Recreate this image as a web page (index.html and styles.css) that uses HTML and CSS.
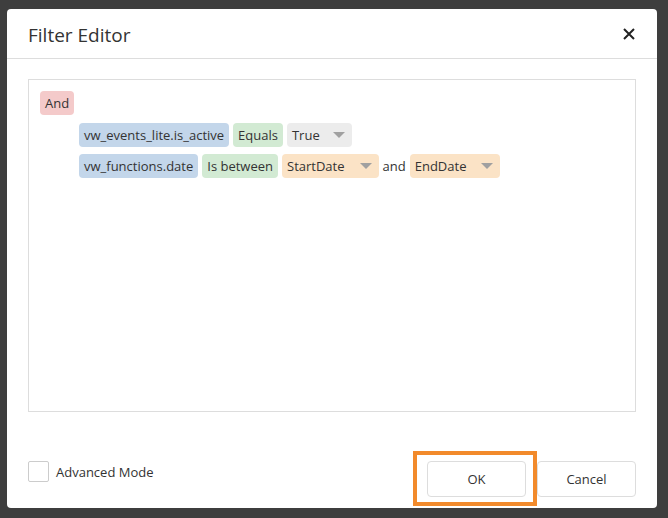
FILE: index.html
```html
<!DOCTYPE html>
<html lang="en">
<head>
    <meta charset="UTF-8" />
    <title>Filter Editor</title>
    <link rel="stylesheet" href="styles.css">
</head>
<body>
    <div class="dialog">
        <div class="dialog-header">
            <h2>Filter Editor</h2>
            <span class="close-btn">
                <svg width="12" height="12" viewBox="0 0 12 12">
                    <path d="M1 1 L11 11 M11 1 L1 11" stroke="#222" stroke-width="2" fill="none" />
                </svg>
            </span>
        </div>

        <div class="dialog-body">
            <div class="filter-box">
                <div class="row">
                    <span class="chip group">And</span>
                </div>
                <div class="row indent">
                    <span class="chip field">vw_events_lite.is_active</span>
                    <span class="chip operator">Equals</span>
                    <span class="chip value dropdown">True</span>
                </div>
                <div class="row indent">
                    <span class="chip field">vw_functions.date</span>
                    <span class="chip operator">Is between</span>
                    <span class="chip param dropdown">StartDate</span>
                    <span class="joiner">and</span>
                    <span class="chip param dropdown">EndDate</span>
                </div>
            </div>
        </div>

        <div class="dialog-footer">
            <label class="check">
                <span class="check-box"></span>
                Advanced Mode
            </label>
            <div class="buttons">
                <button class="btn ok">OK<span class="highlight"></span></button>
                <button class="btn">Cancel</button>
            </div>
        </div>
    </div>
</body>
</html>
```

FILE: styles.css
```css
body {
    font-family: "Open Sans", "Noto Sans", sans-serif;
    background-color: #3e3e3e;
    margin: 0;
    padding: 9px 0 0 7px;
    color: #333;
}

.dialog {
    width: 650px;
    height: 499px;
    background: #fff;
    border-radius: 4px;
    display: flex;
    flex-direction: column;
    box-sizing: border-box;
}

.dialog-header {
    height: 49px;
    border-bottom: 1px solid #ddd;
    display: flex;
    align-items: center;
    justify-content: space-between;
    padding: 0 21px;
}

    .dialog-header h2 {
        margin: 0;
        margin-top: 2px;
        font-size: 19px;
        font-weight: normal;
        color: #333;
    }

.close-btn {
    display: flex;
    margin-right: 1px;
}

.dialog-body {
    padding: 20px 21px 0;
}

.filter-box {
    height: 333px;
    border: 1px solid #ddd;
    padding: 11px;
    box-sizing: border-box;
    display: flex;
    flex-direction: column;
    gap: 7.5px;
}

.row {
    display: flex;
    align-items: center;
    gap: 4px;
}

    .row.indent {
        padding-left: 39px;
    }

.chip {
    height: 24px;
    line-height: 24px;
    padding: 0 5px;
    border-radius: 4px;
    font-size: 13px;
    white-space: nowrap;
}

.group { background: #f4caca; }
.field { background: #c3d6ea; }
.operator { background: #d2ead3; }
.value { background: #ececec; }
.param { background: #fbe3c6; }

.dropdown {
    position: relative;
    padding-right: 29px;
}

    .dropdown::after {
        content: "";
        position: absolute;
        right: 7px;
        top: 9px;
        border-left: 6px solid transparent;
        border-right: 6px solid transparent;
        border-top: 6px solid #a0a0a0;
    }

.value.dropdown { width: 31px; }
.param.dropdown { padding-right: 34px; }

.joiner {
    font-size: 13px;
}

.dialog-footer {
    margin-top: auto;
    display: flex;
    justify-content: space-between;
    align-items: flex-start;
    padding: 0 21px 11px;
}

.check {
    display: flex;
    align-items: center;
    gap: 7px;
    font-size: 13px;
}

.check-box {
    width: 19px;
    height: 19px;
    border: 1px solid #ccc;
    border-radius: 2px;
}

.buttons {
    display: flex;
    gap: 11px;
}

.btn {
    width: 99px;
    height: 36px;
    background: #fff;
    border: 1px solid #ddd;
    border-radius: 4px;
    font-family: inherit;
    font-size: 13px;
    color: #333;
    cursor: pointer;
}

    .btn.ok {
        position: relative;
    }

.highlight {
    position: absolute;
    left: -15px;
    top: -11px;
    width: 124px;
    height: 55px;
    border: 4px solid #f28a2b;
    box-sizing: border-box;
}
```
